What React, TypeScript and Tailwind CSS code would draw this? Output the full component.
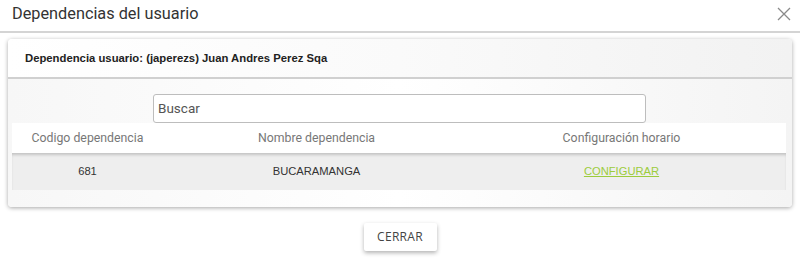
import React from "react";

export default function App() {
  return (
    <div className="w-[800px] h-[263px] bg-white overflow-hidden relative" style={{ fontFamily: "Roboto, 'Liberation Sans', sans-serif" }}>
      <div className="h-[33px] flex items-center pl-[12px] pb-[3px] border-b-2 border-[#d4d4d4]">
        <span className="text-[16.3px] text-[#333] leading-none">Dependencias del usuario</span>
      </div>
      <button className="absolute right-[7px] top-[5px] w-[18px] h-[18px] flex items-center justify-center">
        <svg width="14" height="14" viewBox="0 0 14 14" fill="none" stroke="#8a8a8a" strokeWidth="1.3">
          <path d="M1 1L13 13M13 1L1 13" />
        </svg>
      </button>
      <div className="mx-[8px] mt-[6px] h-[168px] rounded-[4px] bg-white shadow-[0_1px_4px_rgba(0,0,0,0.35)] flex flex-col">
        <div className="h-[40px] shrink-0 flex items-center pl-[17px] border-b-2 border-[#d0d0d0] rounded-t-[4px] bg-gradient-to-r from-white via-[#fafafa] to-[#f2f2f2]">
          <span className="text-[11.3px] font-bold text-[#222]" style={{ fontFamily: "'Liberation Sans', Arial, sans-serif" }}>
            Dependencia usuario: (japerezs) Juan Andres Perez Sqa
          </span>
        </div>
        <div className="flex-1 flex flex-col pt-[15px] bg-gradient-to-r from-[#f7f7f7] via-white to-[#f4f4f4] rounded-b-[4px]">
          <div className="pl-[145px]">
            <div className="w-[493px] h-[29px] border border-[#bdbdbd] rounded-[3px] bg-white flex items-center pl-[4px]">
              <span className="text-[13.5px] text-[#555]">Buscar</span>
            </div>
          </div>
          <div className="mx-[4px] w-[774px]">
            <div className="grid grid-cols-[151px_307px_303px] h-[30px] bg-white items-center text-[12.3px] text-[#777]">
              <div className="text-center">Codigo dependencia</div>
              <div className="text-center">Nombre dependencia</div>
              <div className="text-center">Configuración horario</div>
            </div>
            <div
              className="grid grid-cols-[151px_307px_303px] h-[37px] bg-[#eeeeee] items-center text-[11.2px] text-[#333] shadow-[inset_0_3px_3px_-1px_rgba(0,0,0,0.18)]"
              style={{ fontFamily: "'Liberation Sans', Arial, sans-serif" }}
            >
              <div className="text-center">681</div>
              <div className="text-center">BUCARAMANGA</div>
              <div className="text-center">
                <span className="text-[#9ccc3c] underline">CONFIGURAR</span>
              </div>
            </div>
          </div>
        </div>
      </div>
      <div className="flex justify-center mt-[16px]">
        <button className="w-[73px] h-[28px] bg-white rounded-[2px] shadow-[0_2px_4px_rgba(0,0,0,0.3)] text-[12px] text-[#444] tracking-[0.3px]" style={{ fontFamily: "'Open Sans', Roboto, sans-serif" }}>
          CERRAR
        </button>
      </div>
    </div>
  );
}
